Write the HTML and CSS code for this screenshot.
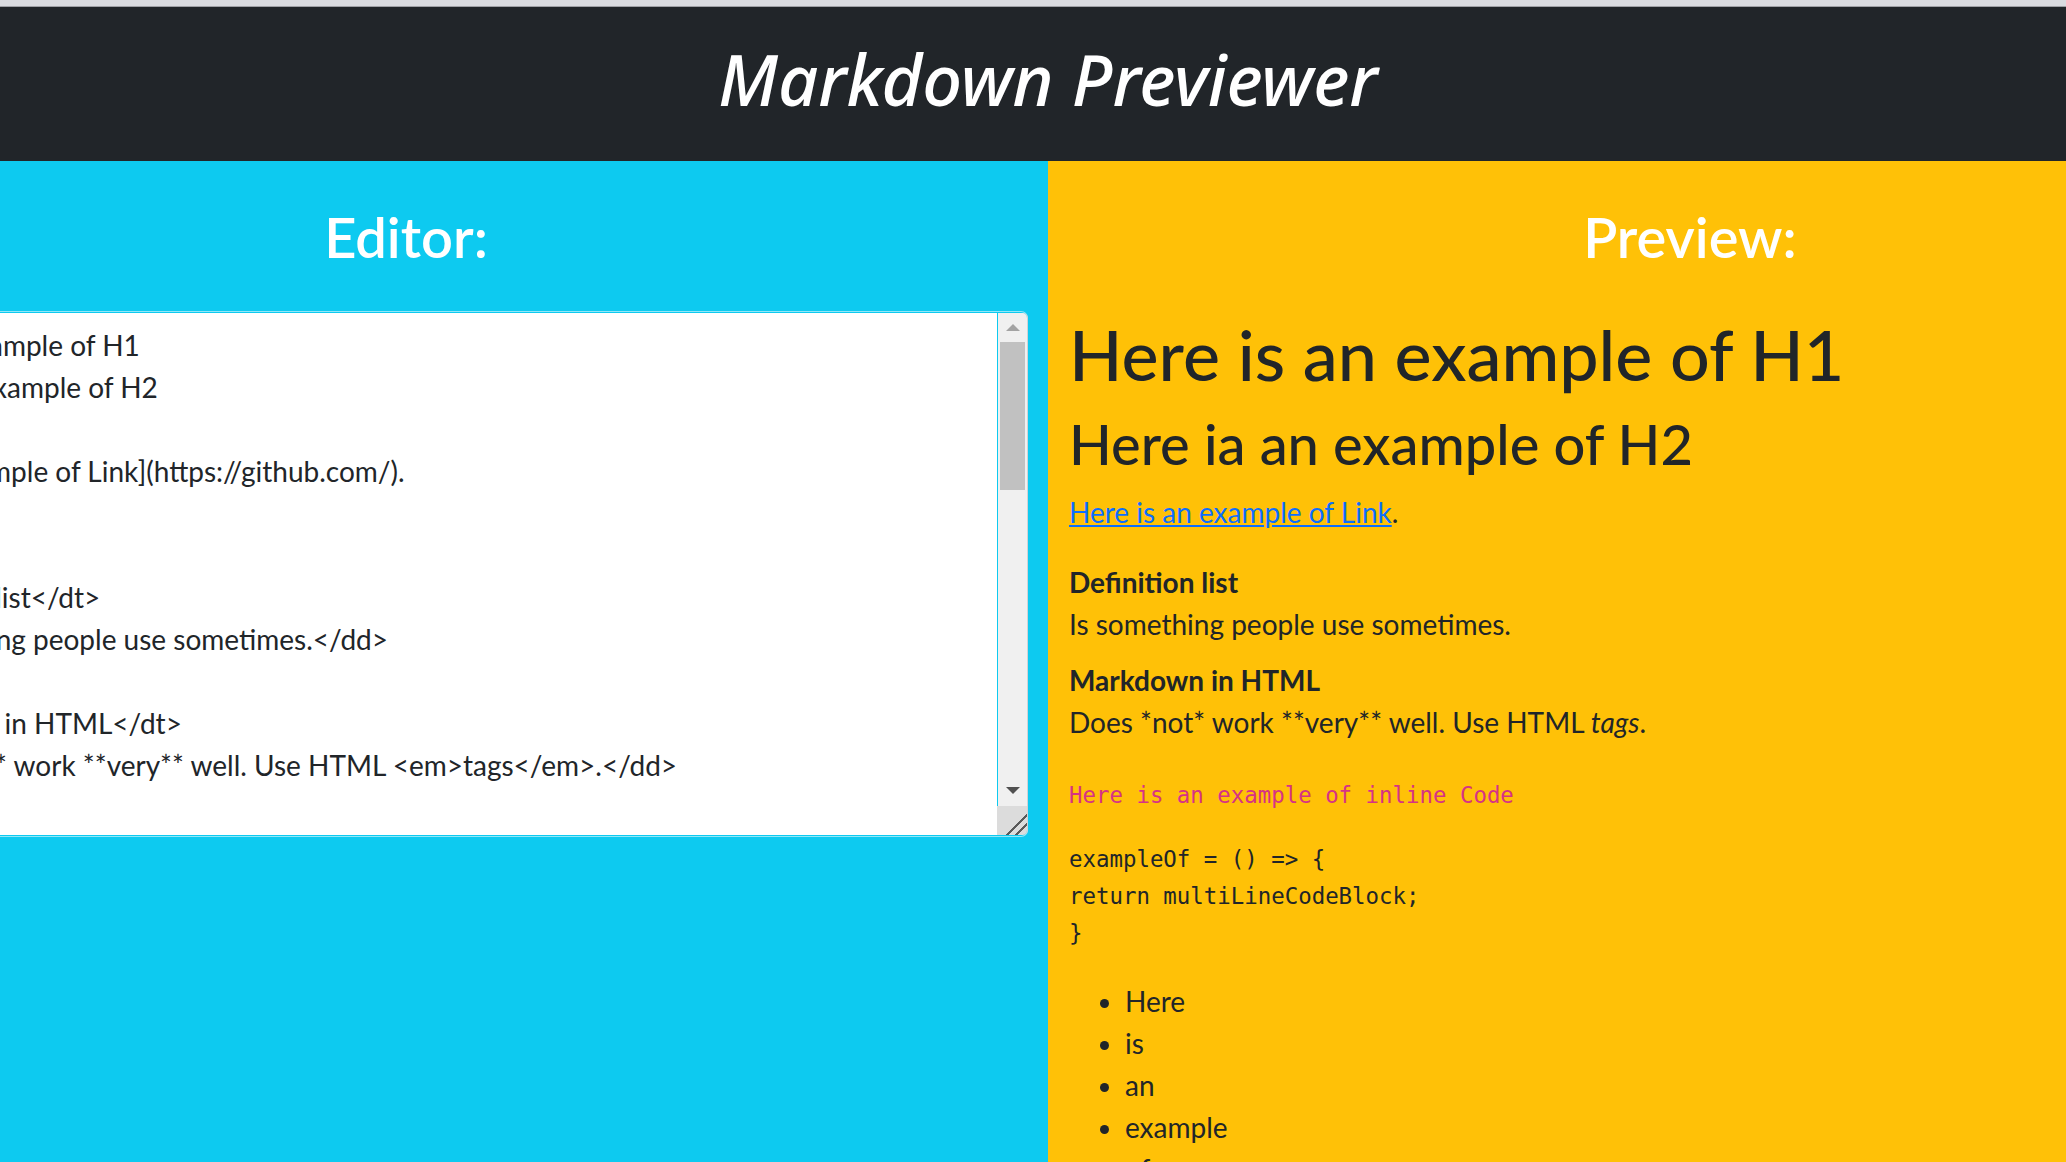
FILE: index.html
```html
<!DOCTYPE html>
<html lang="en">
<head>
<meta charset="utf-8">
<title>Markdown Previewer</title>
<link rel="stylesheet" href="styles.css">
</head>
<body>
<div class="page">
  <div class="chrome-bar"></div>
  <header class="topbar">
    <h1 class="app-title">Markdown Previewer</h1>
  </header>
  <main class="panes">
    <section class="pane pane-editor">
      <h2 class="pane-title">Editor:</h2>
      <div class="editor-box">
        <textarea id="editor" class="editor" spellcheck="false">
# Here is an example of H1
## Here ia an example of H2

[Here is an example of Link](https://github.com/).

&lt;dl&gt;
&lt;dt&gt;Definition list&lt;/dt&gt;
&lt;dd&gt;Is something people use sometimes.&lt;/dd&gt;

&lt;dt&gt;Markdown in HTML&lt;/dt&gt;
&lt;dd&gt;Does *not* work **very** well. Use HTML &lt;em&gt;tags&lt;/em&gt;.&lt;/dd&gt;
&lt;/dl&gt;

&#96;Here is an example of inline Code&#96;

&#96;&#96;&#96;
exampleOf = () =&gt; {
return multiLineCodeBlock;
}
&#96;&#96;&#96;

- Here
- is
- an
- example
- of
- list

&gt; Here is an example of Blockquote

![Here is an example of Image](https://cdn.freecodecamp.org/testable-projects-fcc/images/fcc_secondary.svg)

**Here is an example of Bolded Text**

_Here is an example of Italic Text_</textarea>
        <div class="vscroll" aria-hidden="true">
          <div class="vscroll-btn"><span class="arrow arrow-up"></span></div>
          <div class="vscroll-track"><div class="vscroll-thumb"></div></div>
          <div class="vscroll-btn"><span class="arrow arrow-down"></span></div>
          <div class="vscroll-grip"></div>
        </div>
      </div>
    </section>
    <section class="pane pane-preview">
      <h2 class="pane-title">Preview:</h2>
      <div id="preview" class="preview">
        <h1>Here is an example of H1</h1>
        <h2>Here ia an example of H2</h2>
        <p><a href="#">Here is an example of Link</a>.</p>
        <dl>
          <dt>Definition list</dt>
          <dd>Is something people use sometimes.</dd>
          <dt>Markdown in HTML</dt>
          <dd>Does *not* work **very** well. Use HTML <em>tags</em>.</dd>
        </dl>
        <p><code>Here is an example of inline Code</code></p>
<pre><code>exampleOf = () =&gt; {
return multiLineCodeBlock;
}</code></pre>
        <ul>
          <li>Here</li>
          <li>is</li>
          <li>an</li>
          <li>example</li>
          <li>of</li>
          <li>list</li>
        </ul>
        <blockquote><p>Here is an example of Blockquote</p></blockquote>
        <p><strong>Here is an example of Bolded Text</strong></p>
        <p><em>Here is an example of Italic Text</em></p>
      </div>
    </section>
  </main>
</div>
</body>
</html>
```
FILE: styles.css
```css
html {
  overflow: hidden;
}

body {
  margin: 0;
  font-family: Lato, "Open Sans", sans-serif;
  font-size: 28px;
  line-height: 1.5;
  color: #212529;
  background: #fff;
}

/* the page is wider than the window and is shown scrolled 236px to the right */
.page {
  width: 2568px;
  margin-left: -236px;
}

.chrome-bar {
  height: 6px;
  background: #dadbe0;
  border-bottom: 1px solid #9fa0a5;
}

.topbar {
  background: #212529;
  padding: 30px 0 40px;
  text-align: center;
}

.app-title {
  margin: 0;
  font-family: "Noto Sans", "Open Sans", sans-serif;
  font-style: italic;
  font-weight: 500;
  font-size: 70px;
  line-height: 84px;
  color: #fff;
}

.panes {
  display: grid;
  grid-template-columns: 1fr 1fr;
}

.pane {
  padding: 42px 21px 0;
}

.pane-editor {
  background: #0dcaf0;
}

.pane-preview {
  background: #ffc107;
}

.pane-title {
  margin: 0 0 42px;
  text-align: center;
  color: #fff;
  font-size: 56px;
  line-height: 67.2px;
  font-weight: 600;
}

/* editor textarea */
.editor-box {
  position: relative;
}

.editor {
  display: block;
  box-sizing: border-box;
  width: 100%;
  height: 524px;
  margin: 0;
  padding: 10.5px 51px 10.5px 21px;
  border: 1px solid #0dcaf0;
  border-radius: 6px;
  box-shadow: 0 0 0 1px rgba(255, 255, 255, 0.55);
  background: #fff;
  color: #212529;
  font: inherit;
  line-height: 42px;
  resize: none;
  outline: none;
  overflow: hidden;
}

/* drawn scrollbar over the textarea's right edge */
.vscroll {
  position: absolute;
  top: 1px;
  right: 0;
  bottom: 1px;
  width: 30px;
  display: flex;
  flex-direction: column;
  border-radius: 0 5px 5px 0;
  overflow: hidden;
  box-shadow: 1px 0 0 #cfd3d6;
}

.vscroll-btn {
  flex: 0 0 29px;
  display: flex;
  align-items: center;
  justify-content: center;
  border-left: 1px solid #0dcaf0;
  background: #f0f0f0;
}

.arrow {
  width: 0;
  height: 0;
  border-left: 7px solid transparent;
  border-right: 7px solid transparent;
}

.arrow-up {
  border-bottom: 7px solid #a3a3a3;
}

.arrow-down {
  margin-top: -3px;
  border-top: 7px solid #505050;
}

.vscroll-track {
  flex: 1;
  border-left: 1px solid #0dcaf0;
  background: #f0f0f0;
  padding: 0 2px 0 2px;
}

.vscroll-thumb {
  height: 148px;
  background: #c1c1c1;
}

.vscroll-grip {
  flex: 0 0 29px;
  background:
    linear-gradient(135deg, transparent 64%, #5a5a5a 64% 69%, transparent 69% 79%, #5a5a5a 79% 84%, transparent 84%),
    #dcdcdc;
}

/* preview */
.preview h1 {
  margin: 0 0 14px;
  font-size: 70px;
  line-height: 84px;
  font-weight: 500;
}

.preview h2 {
  margin: 0 0 14px;
  font-size: 56px;
  line-height: 67.2px;
  font-weight: 500;
}

.preview p {
  margin: 0 0 28px;
}

.preview a {
  color: #0d6efd;
  text-decoration: underline;
}

.preview dl {
  margin: 0 0 28px;
}

.preview dt {
  font-weight: 700;
}

.preview dd {
  margin: 0 0 14px;
}

.preview code {
  font-family: "DejaVu Sans Mono", "Liberation Mono", monospace;
  font-size: 22.4px;
  color: #d63384;
}

.preview pre {
  margin: 0 0 28px;
  font-family: "DejaVu Sans Mono", "Liberation Mono", monospace;
  font-size: 22.4px;
  line-height: 36.75px;
}

.preview pre code {
  color: inherit;
  font-size: inherit;
}

.preview ul {
  margin: 0 0 28px;
  padding-left: 56px;
}

.preview blockquote {
  margin: 0 0 28px;
}
```
